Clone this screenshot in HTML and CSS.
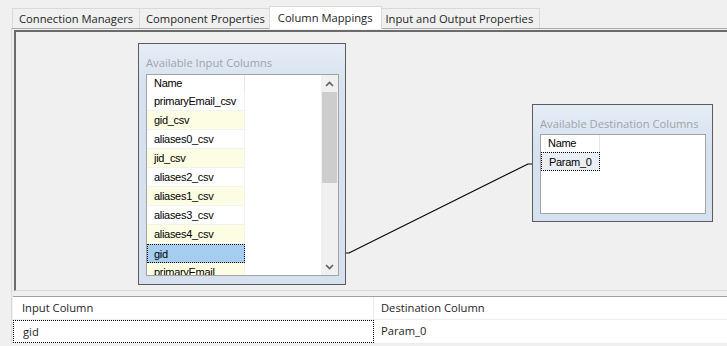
FILE: index.html
```html
<!DOCTYPE html>
<html lang="en">
<head>
  <meta charset="UTF-8" />
  <title>Column Mappings</title>
  <link rel="stylesheet" href="styles.css">
</head>
<body>
  <div class="tabs">
    <div class="tab">Connection Managers</div>
    <div class="tab">Component Properties</div>
    <div class="tab active">Column Mappings</div>
    <div class="tab">Input and Output Properties</div>
  </div>

  <div class="page">
    <div class="canvas">
      <!-- connector between gid and Param_0 -->
      <svg class="link" width="711" height="258">
        <polyline points="330,221 333,221 512,132 516,132" fill="none" stroke="#000" stroke-width="1.2" />
      </svg>

      <div class="win win-input">
        <div class="win-title">Available Input Columns</div>
        <div class="listbox">
          <div class="rows">
            <div class="row head"><span class="cell">Name</span></div>
            <div class="row"><span class="cell">primaryEmail_csv</span></div>
            <div class="row alt"><span class="cell">gid_csv</span></div>
            <div class="row"><span class="cell">aliases0_csv</span></div>
            <div class="row alt"><span class="cell">jid_csv</span></div>
            <div class="row"><span class="cell">aliases2_csv</span></div>
            <div class="row alt"><span class="cell">aliases1_csv</span></div>
            <div class="row"><span class="cell">aliases3_csv</span></div>
            <div class="row alt"><span class="cell">aliases4_csv</span></div>
            <div class="row sel"><span class="cell">gid</span></div>
            <div class="row alt"><span class="cell">primaryEmail</span></div>
          </div>
          <div class="scroll">
            <div class="arrow">
              <svg width="9" height="6"><polyline points="1,5 4.5,1.5 8,5" fill="none" stroke="#606060" stroke-width="1.6" /></svg>
            </div>
            <div class="thumb"></div>
            <div class="track"></div>
            <div class="arrow">
              <svg width="9" height="6"><polyline points="1,1 4.5,4.5 8,1" fill="none" stroke="#606060" stroke-width="1.6" /></svg>
            </div>
          </div>
        </div>
      </div>

      <div class="win win-dest">
        <div class="win-title">Available Destination Columns</div>
        <div class="listbox">
          <div class="rows">
            <div class="row head"><span class="cell short">Name</span></div>
            <div class="row focus"><span class="cell short">Param_0</span></div>
          </div>
        </div>
      </div>
    </div>

    <div class="grid">
      <div class="grow ghead">
        <div class="gcell first">Input Column</div>
        <div class="gcell">Destination Column</div>
      </div>
      <div class="grow">
        <div class="gcell first current">gid</div>
        <div class="gcell">Param_0</div>
      </div>
    </div>
  </div>
</body>
</html>
```

FILE: styles.css
```css
body {
  margin: 0;
  background: #f0f0f0;
  font-family: 'Open Sans', 'Noto Sans', sans-serif;
  font-size: 11.2px;
  color: #1e1e1e;
  overflow: hidden;
  width: 727px;
  height: 346px;
}
.tabs {
  display: flex;
  align-items: flex-start;
  height: 20px;
  padding: 8px 0 0 13px;
}
.tab {
  height: 20px;
  box-sizing: border-box;
  padding: 0 6px;
  margin-left: -1px;
  border: 1px solid #d9d9d9;
  border-bottom: none;
  line-height: 19px;
  white-space: nowrap;
  background: #f0f0f0;
}
.tab.active {
  background: #fff;
  height: 23px;
  margin: -2px -2px 0 -3px;
  padding: 1px 8px 0;
  position: relative;
  z-index: 1;
}
.page {
  margin-left: 11px;
  border-left: 1px solid #d9d9d9;
  border-top: 1px solid #a9a9a9;
  padding: 1px 0 0 2px;
}
/* design surface */
.canvas {
  position: relative;
  height: 258px;
  border-left: 2px solid #6b6b6b;
  border-top: 2px solid #6b6b6b;
  border-bottom: 1px solid #dadada;
}
.link {
  position: absolute;
  left: 0;
  top: 0;
}
.win {
  position: absolute;
  box-sizing: border-box;
  border: 1px solid #5c5c5c;
  background: linear-gradient(#e6edf6, #d6e2f0 40px, #d5e1ef);
  padding: 9px 6px 8px 7px;
  display: flex;
  flex-direction: column;
}
.win-input {
  left: 122px;
  top: 11px;
  width: 208px;
  height: 242px;
}
.win-dest {
  left: 516px;
  top: 72px;
  width: 181px;
  height: 118px;
  padding-right: 6px;
  padding-bottom: 7px;
}
.win-title {
  color: #a0a4a9;
  font-size: 11.2px;
  line-height: 20px;
  height: 20px;
  white-space: nowrap;
}
.win-input .win-title {
  margin-bottom: 1px;
}
.listbox {
  flex: 1;
  background: #fff;
  border: 1px solid #a3a3a3;
  display: flex;
  overflow: hidden;
}
.rows {
  flex: 1;
  font-family: 'Liberation Sans', Arial, sans-serif;
  font-size: 11px;
  letter-spacing: -0.3px;
  color: #000;
}
.row {
  height: 19px;
  line-height: 18px;
}
.row .cell {
  display: block;
  width: 90px;
  height: 18px;
  padding-left: 7px;
  border-right: 1px solid #f2f2f2;
  border-bottom: 1px solid #f2f2f2;
  white-space: nowrap;
  overflow: hidden;
}
.row.head {
  height: 17px;
  line-height: 17px;
}
.row.head .cell {
  height: 17px;
  border-bottom: none;
  border-right-color: #e6e6e6;
}
.row.alt .cell {
  background: #fdfde3;
}
.row.sel .cell {
  background: #a6cef1;
  box-sizing: border-box;
  width: 98px;
  height: 19px;
  border: 1px dotted #000;
  padding-left: 6px;
}
.cell.short {
  width: 51px;
}
.row.focus .cell {
  box-sizing: border-box;
  width: 59px;
  height: 19px;
  margin-left: 0;
  padding-left: 7px;
  border: 1px dotted #000;
  background: #e9eef4;
}
.scroll {
  width: 17px;
  background: #f0f0f0;
  display: flex;
  flex-direction: column;
}
.arrow {
  height: 17px;
  display: flex;
  align-items: center;
  justify-content: center;
}
.thumb {
  height: 91px;
  margin: 0 1px;
  background: #cdcdcd;
}
.track {
  flex: 1;
}
/* mapping grid */
.grid {
  margin-top: 5px;
  margin-left: -1px;
  background: #fff;
  border-top: 1px solid #a0a0a0;
}
.grow {
  display: flex;
  height: 23px;
  border-bottom: 1px solid #ececec;
}
.ghead {
  height: 22px;
}
.gcell {
  line-height: 22px;
  padding-left: 7px;
  white-space: nowrap;
}
.gcell.first {
  box-sizing: border-box;
  width: 361px;
  padding-left: 9px;
  border-right: 1px solid #ececec;
}
.gcell.current {
  border: 1px dotted #000;
  line-height: 21px;
}
```
